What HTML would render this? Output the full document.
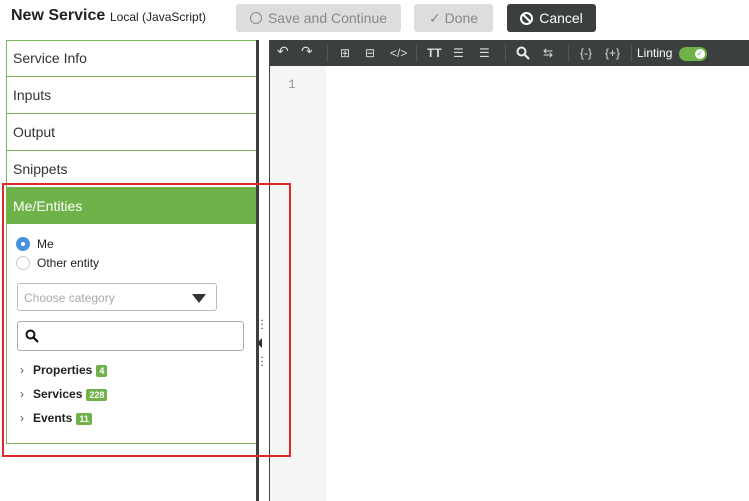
<!DOCTYPE html>
<html><head><style>
*{margin:0;padding:0;box-sizing:border-box}
body{width:749px;height:501px;background:#fff;font-family:"Liberation Sans",sans-serif;position:relative;overflow:hidden;color:#222}
.abs{position:absolute}
.btn{position:absolute;top:4px;height:28px;border-radius:3px;font-size:14px;line-height:28px;text-align:center}
.row{position:absolute;left:6px;width:251px;border:1px solid #7ab55c;border-bottom:none;font-size:14px;padding-left:6px;color:#333}
.ti{color:#ddd;font-size:12px;position:absolute;top:46px}
.badge{display:inline-block;background:#6fb24a;color:#fff;font-size:9px;font-weight:bold;padding:1px 3px;border-radius:2px;vertical-align:middle;margin-left:4px;line-height:10px}
.tree{position:absolute;left:20px;font-size:12px;font-weight:bold}
.tree span.c{font-weight:normal;color:#555;margin-right:9px}
</style></head><body>
<div class="abs" style="left:11px;top:7px;font-size:16px;font-weight:bold">New Service</div>
<div class="abs" style="left:110px;top:10px;font-size:12px">Local (JavaScript)</div>
<div class="btn" style="left:236px;width:165px;background:#ddd;color:#888"><span style="display:inline-block;width:12px;height:12px;border:1.5px solid #888;border-radius:50%;vertical-align:-1px;margin-right:6px"></span>Save and Continue</div>
<div class="btn" style="left:414px;width:79px;background:#ddd;color:#888">✓ Done</div>
<div class="btn" style="left:507px;width:89px;background:#3b3f3d;color:#fff"><span style="display:inline-block;width:13px;height:13px;border:2px solid #fff;border-radius:50%;vertical-align:-2px;margin-right:6px;position:relative"><span style="position:absolute;left:3.5px;top:-1px;width:2px;height:11px;background:#fff;transform:rotate(-45deg)"></span></span>Cancel</div>

<div class="row" style="top:40px;height:37px;line-height:35px">Service Info</div>
<div class="row" style="top:76px;height:37px;line-height:37px">Inputs</div>
<div class="row" style="top:113px;height:37px;line-height:37px">Output</div>
<div class="row" style="top:150px;height:37px;line-height:37px">Snippets</div>
<div class="row" style="top:187px;height:37px;line-height:37px;background:#6fb24a;color:#fff;border-color:#6fb24a">Me/Entities</div>
<div class="abs" style="left:6px;top:224px;width:251px;height:220px;border:1px solid #7ab55c;border-top:none"></div>

<div class="abs" style="left:16px;top:237px;width:14px;height:14px;border-radius:50%;background:#4a90e2"><div style="position:absolute;left:5px;top:5px;width:4px;height:4px;background:#fff;border-radius:50%"></div></div>
<div class="abs" style="left:37px;top:237px;font-size:12px">Me</div>
<div class="abs" style="left:16px;top:256px;width:14px;height:14px;border-radius:50%;border:1px solid #ccc"></div>
<div class="abs" style="left:37px;top:256px;font-size:12px">Other entity</div>
<div class="abs" style="left:17px;top:283px;width:200px;height:28px;border:1px solid #bbb;border-radius:3px;font-size:12px;color:#aaa;padding:7px 0 0 6px">Choose category<div style="position:absolute;right:10px;top:10px;border-left:7px solid transparent;border-right:7px solid transparent;border-top:9px solid #333"></div></div>
<div class="abs" style="left:17px;top:321px;width:227px;height:30px;border:1px solid #aaa;border-radius:3px"><svg width="14" height="14" style="position:absolute;left:7px;top:7px"><circle cx="5.5" cy="5.5" r="4" fill="none" stroke="#111" stroke-width="2"/><path d="M8.5 8.5L13 13" stroke="#111" stroke-width="2.2"/></svg></div>
<div class="tree" style="top:363px"><span class="c">›</span>Properties<span class="badge">4</span></div>
<div class="tree" style="top:387px"><span class="c">›</span>Services<span class="badge">228</span></div>
<div class="tree" style="top:411px"><span class="c">›</span>Events<span class="badge">11</span></div>

<div class="abs" style="left:256px;top:40px;width:3px;height:461px;background:#3b3f3d"></div>
<div class="abs" style="left:269px;top:40px;width:1px;height:461px;background:#444"></div>
<div class="abs" style="left:261px;top:319px;font-size:8px;line-height:4px;color:#333;font-weight:bold">·<br>·<br>·</div>
<div class="abs" style="left:257px;top:338px;border-top:5px solid transparent;border-bottom:5px solid transparent;border-right:5px solid #333"></div>
<div class="abs" style="left:261px;top:356px;font-size:8px;line-height:4px;color:#333;font-weight:bold">·<br>·<br>·</div>

<div class="abs" style="left:270px;top:40px;width:479px;height:26px;background:#3b3f3d"></div>
<div class="abs" style="left:270px;top:66px;width:56px;height:435px;background:#f5f5f5"></div>
<div class="abs" style="left:288px;top:77px;font-family:'Liberation Mono',monospace;font-size:13px;color:#999">1</div>
<div class="ti" style="left:277px;font-size:14px;top:43px">↶</div>
<div class="ti" style="left:301px;font-size:14px;top:43px">↷</div>
<div class="abs" style="left:327px;top:44px;width:1px;height:18px;background:#555"></div>
<div class="ti" style="left:340px">⊞</div>
<div class="ti" style="left:365px">⊟</div>
<div class="ti" style="left:390px">&lt;/&gt;</div>
<div class="abs" style="left:416px;top:44px;width:1px;height:18px;background:#555"></div>
<div class="ti" style="left:427px;font-weight:bold">TT</div>
<div class="ti" style="left:453px">☰</div>
<div class="ti" style="left:479px">☰</div>
<div class="abs" style="left:505px;top:44px;width:1px;height:18px;background:#555"></div>
<svg class="abs" style="left:516px;top:46px" width="14" height="14"><circle cx="5.5" cy="5.5" r="4" fill="none" stroke="#eee" stroke-width="2"/><path d="M8.5 8.5L13 13" stroke="#eee" stroke-width="2.2"/></svg>
<div class="ti" style="left:543px">⇆</div>
<div class="abs" style="left:568px;top:44px;width:1px;height:18px;background:#555"></div>
<div class="ti" style="left:580px">{-}</div>
<div class="ti" style="left:605px">{+}</div>
<div class="abs" style="left:631px;top:44px;width:1px;height:18px;background:#555"></div>
<div class="ti" style="left:637px;color:#fff">Linting</div>
<div class="abs" style="left:679px;top:47px;width:28px;height:14px;border-radius:7px;background:#6fb24a"><div style="position:absolute;right:2px;top:2px;width:10px;height:10px;border-radius:50%;background:#fff;font-size:8px;color:#6fb24a;text-align:center;line-height:10px">✓</div></div>

<div class="abs" style="left:2px;top:183px;width:289px;height:274px;border:2px solid #e0272b"></div>
</body></html>
